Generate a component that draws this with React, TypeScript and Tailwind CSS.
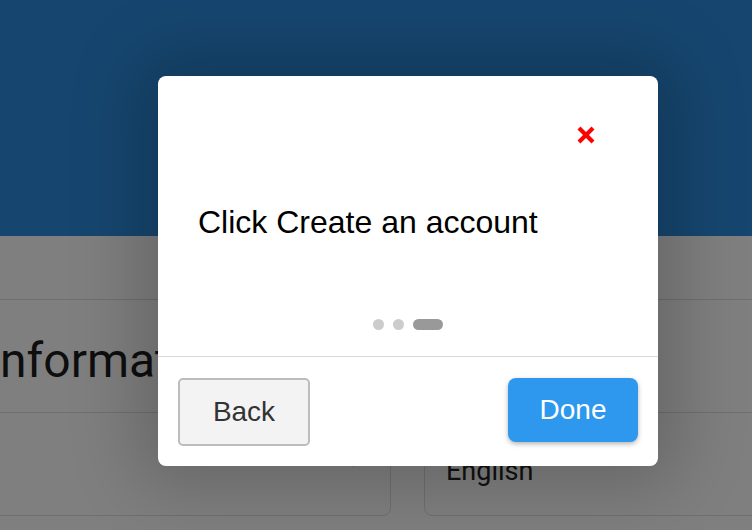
import React from "react";

export default function App() {
  return (
    <div className="relative w-[752px] h-[530px] overflow-hidden bg-white">
      {/* underlying page */}
      <div className="h-[236px] bg-[#2c8dde]" />
      <div className="h-[64px] border-b border-[#dedede]" />
      <div className="h-[112px] pt-[33px] overflow-hidden">
        <div
          className="ml-[-13px] whitespace-nowrap text-[48px] leading-[56px] text-[#1c1c1c]"
          style={{ fontFamily: "Roboto, sans-serif" }}
        >
          Information
        </div>
      </div>
      <div className="flex gap-[33px] ml-[-20px]">
        <div className="w-[411px] h-[104px] shrink-0 border border-[#dedede] rounded-[8px] flex justify-end pr-[31px] pt-[44px]">
          <svg width="12" height="10" viewBox="0 0 12 10">
            <polyline points="1,2 6,8 11,2" fill="none" stroke="#222" strokeWidth="2" />
          </svg>
        </div>
        <div className="w-[400px] h-[104px] shrink-0 border border-[#dedede] rounded-[8px] pl-[21px] pt-[42px]">
          <div className="text-[27px] leading-[32px] text-[#222]" style={{ fontFamily: "Roboto, sans-serif" }}>
            English
          </div>
        </div>
      </div>

      {/* overlay */}
      <div className="absolute inset-0 bg-black/50" />

      {/* modal */}
      <div
        className="absolute left-[158px] top-[76px] w-[500px] h-[390px] bg-white rounded-[8px] shadow-[0_0_70px_20px_rgba(0,0,0,0.2)] flex flex-col"
        style={{ fontFamily: "'Liberation Sans', Arial, sans-serif" }}
      >
        <div className="flex justify-end pt-[49px] pr-[62px]">
          <svg width="20" height="20" viewBox="0 0 20 20">
            <path d="M3 3 L17 17 M17 3 L3 17" stroke="#ff0000" strokeWidth="4.2" strokeLinecap="butt" />
          </svg>
        </div>
        <div className="pl-[40px] mt-[59px] text-[32px] leading-[36px] text-black">Click Create an account</div>
        <div className="mt-[79px] flex justify-center items-center gap-[9px]">
          <div className="w-[11px] h-[11px] rounded-full bg-[#cccccc]" />
          <div className="w-[11px] h-[11px] rounded-full bg-[#cccccc]" />
          <div className="w-[30px] h-[11px] rounded-full bg-[#999999]" />
        </div>
        <div className="mt-[26px] h-px bg-[#dadada]" />
        <div className="flex justify-between items-start px-[20px] pt-[21px]">
          <button className="w-[132px] h-[68px] bg-[#f3f3f3] border-2 border-[#bdbdbd] rounded-[5px] text-[28px] text-[#333]">
            Back
          </button>
          <button className="w-[130px] h-[64px] bg-[#2d98ee] rounded-[8px] text-[28px] text-white shadow-[0_2px_5px_rgba(0,0,0,0.3)]">
            Done
          </button>
        </div>
      </div>
    </div>
  );
}
